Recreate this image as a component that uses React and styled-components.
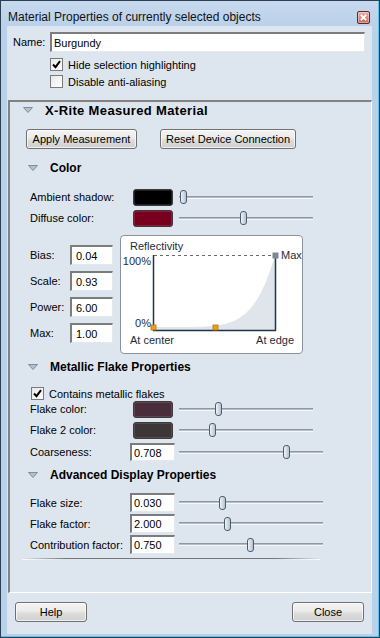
import React from 'react';
import styled, { createGlobalStyle } from 'styled-components';

const GlobalStyle = createGlobalStyle`
  html, body { margin: 0; padding: 0; background: #ffffff; }
  body { font-family: "Liberation Sans", Arial, sans-serif; font-size: 11px; color: #000; }
  * { box-sizing: border-box; }
`;

const Window = styled.div`
  width: 380px;
  height: 638px;
  border: 1px solid #2c3e52;
  background: linear-gradient(#c6d9ed 0px, #bad1ea 26px, #b9d1ea 100%);
  box-shadow: inset -1px 0 0 #5cc4ef, inset 0 -1px 0 #5cc4ef;
  display: flex;
  flex-direction: column;
  padding: 0 7px 3px 6px;
`;

const TitleBar = styled.div`
  height: 25px;
  flex: none;
  display: flex;
  align-items: flex-start;
  justify-content: space-between;
  padding: 9px 2px 0 1px;
  font-size: 12px;
  line-height: 14px;
  color: #111;
`;

const CloseBtn = styled.div`
  width: 13px;
  height: 13px;
  margin-top: 1px;
  border: 1px solid #5b2a2a;
  border-radius: 2px;
  background: linear-gradient(#eab0a6, #c8685c);
  box-shadow: inset 0 0 0 1px rgba(255, 255, 255, 0.35);
  display: flex;
  align-items: center;
  justify-content: center;
`;

const Content = styled.div`
  flex: 1;
  background: #dde6ee;
  display: flex;
  flex-direction: column;
  min-height: 0;
`;

const TopSection = styled.div`
  padding: 6px 7px 0 6px;
  flex: none;
`;

const NameRow = styled.div`
  display: flex;
  align-items: center;
  height: 20px;
`;

const NameLabel = styled.span`
  width: 37px;
`;

const SunkenInput = styled.div`
  height: ${(p) => p.$h || 20}px;
  width: ${(p) => (p.$w ? `${p.$w}px` : 'auto')};
  flex: ${(p) => (p.$w ? 'none' : '1')};
  background: #fff;
  border-top: 2px solid #7c7c7c;
  border-left: 2px solid #7c7c7c;
  border-right: 1px solid #e4e8ec;
  border-bottom: 1px solid #e4e8ec;
  padding-left: ${(p) => p.$pad ?? 2}px;
  display: flex;
  align-items: center;
  font-size: 11px;
  line-height: 12px;
  white-space: nowrap;
`;

const CheckRow = styled.label`
  display: flex;
  align-items: center;
  gap: 5px;
  height: 13px;
  margin-top: ${(p) => p.$mt || 0}px;
  margin-left: ${(p) => p.$ml || 0}px;
`;

const Box = styled.span`
  width: 13px;
  height: 13px;
  flex: none;
  border: 1px solid #7a7a7a;
  background: linear-gradient(135deg, #e8e8e8, #ffffff);
  display: flex;
  align-items: center;
  justify-content: center;
`;

const Panel = styled.div`
  flex: 1;
  margin: 12px 0 0 1px;
  border-top: 2px solid #828282;
  border-left: 2px solid #828282;
  border-right: 1px solid #ffffff;
  border-bottom: 1px solid #ffffff;
  display: flex;
  flex-direction: column;
  min-height: 0;
`;

const MainHeader = styled.div`
  display: flex;
  align-items: center;
  height: 16px;
  padding-left: 13px;
  gap: 12px;
  font-weight: bold;
  font-size: 13px;
  letter-spacing: 0.35px;
`;

const SubHeader = styled.div`
  display: flex;
  align-items: center;
  height: 16px;
  margin-top: ${(p) => p.$mt || 0}px;
  padding-left: 18px;
  gap: 12px;
  font-weight: bold;
  font-size: 12px;
`;

const ButtonRow = styled.div`
  display: flex;
  gap: 23px;
  margin-top: 11px;
  padding-left: 16px;
`;

const Button = styled.div`
  width: ${(p) => p.$w}px;
  height: 20px;
  border: 1px solid #707070;
  border-radius: 3px;
  background: linear-gradient(#f3f3f3 0%, #ebebeb 45%, #dddddd 55%, #cfcfcf 100%);
  box-shadow: inset 0 0 0 1px rgba(255, 255, 255, 0.7);
  display: flex;
  align-items: center;
  justify-content: center;
  font-size: 11px;
  color: #000;
`;

const Row = styled.div`
  display: flex;
  align-items: center;
  height: ${(p) => p.$h || 18}px;
  margin-top: ${(p) => p.$mt || 0}px;
  padding-left: 20px;
`;

const RowLabel = styled.span`
  width: ${(p) => p.$w}px;
  flex: none;
  white-space: nowrap;
`;

const Swatch = styled.div`
  width: 40px;
  height: 17px;
  flex: none;
  border: 1px solid #3a3a3a;
  border-radius: 3px;
  background: ${(p) => p.$color};
  box-shadow: inset 0 0 0 1px rgba(255, 255, 255, 0.12);
`;

const SliderWrap = styled.div`
  position: relative;
  width: ${(p) => p.$w}px;
  height: 14px;
  margin-left: ${(p) => p.$ml}px;
  flex: none;
  display: flex;
  align-items: center;
`;

const Track = styled.div`
  width: 100%;
  height: 3px;
  border-top: 1px solid #8e98a3;
  border-bottom: 1px solid #f5f8fb;
  background: #b5bec8;
`;

const Thumb = styled.div`
  position: absolute;
  top: 0;
  width: 7px;
  height: 14px;
  border: 1px solid #4c5c6d;
  border-radius: 3px;
  background: linear-gradient(to right, #eef3f8, #b4c2d1);
`;

const BiasBlock = styled.div`
  display: flex;
  margin-top: 8px;
  padding-left: 20px;
`;

const ParamColumn = styled.div`
  display: flex;
  flex-direction: column;
  gap: 6px;
  padding-top: 10px;
`;

const ParamRow = styled.div`
  display: flex;
  align-items: center;
  height: 20px;
`;

const GraphBox = styled.div`
  width: 183px;
  height: 119px;
  margin-left: 7px;
  border: 1px solid #8a939c;
  border-radius: 4px;
  background: #ffffff;
  display: flex;
`;

const Separator = styled.div`
  width: 298px;
  height: 2px;
  margin: 4px 0 0 12px;
  background: linear-gradient(to right, rgba(110,120,130,0), #6e7882 15%, #6e7882 85%, rgba(110,120,130,0));
  border-bottom: 1px solid rgba(255,255,255,0.8);
`;

const Footer = styled.div`
  height: 41px;
  flex: none;
  display: flex;
  justify-content: space-between;
  align-items: flex-start;
  padding: 9px 8px 0 8px;
`;

const Triangle = () => (
  <svg width="10" height="6" viewBox="0 0 10 6">
    <polygon points="0.5,0.5 9.5,0.5 5,5.5" fill="#b3c0cd" stroke="#7d8ea1" strokeWidth="1" />
  </svg>
);

const Check = ({ checked }) => (
  <Box>
    {checked && (
      <svg width="9" height="9" viewBox="0 0 9 9">
        <path d="M1 4.5 L3.5 7.2 L8 1.2" fill="none" stroke="#000" strokeWidth="2" />
      </svg>
    )}
  </Box>
);

const Slider = ({ width, ml, pos }) => (
  <SliderWrap $w={width} $ml={ml}>
    <Track />
    <Thumb style={{ left: pos - 3.5 }} />
  </SliderWrap>
);

const curvePoints = () => {
  const pts = ['32,94'];
  for (let i = 0; i <= 60; i++) {
    const t = i / 60;
    const f = Math.min(1, 0.04 + 0.96 * Math.pow(t, 6));
    pts.push(`${(32 + t * 122).toFixed(2)},${(94 - 75 * f).toFixed(2)}`);
  }
  pts.push('154,94');
  return pts.join(' ');
};

const Graph = () => (
  <svg width="181" height="117" viewBox="0 0 181 117" style={{ fontFamily: '"Liberation Sans", Arial, sans-serif', fontSize: 11 }}>
    <text x="9" y="14" fill="#1d2c3c">Reflectivity</text>
    <polygon points={curvePoints()} fill="#dfe5eb" />
    <line x1="33" y1="19.5" x2="152" y2="19.5" stroke="#6a6a6a" strokeDasharray="3 3" />
    <line x1="32.5" y1="19" x2="32.5" y2="95" stroke="#20344a" strokeWidth="1.5" />
    <line x1="32" y1="94.5" x2="155" y2="94.5" stroke="#20344a" strokeWidth="1.5" />
    <line x1="154.5" y1="19" x2="154.5" y2="95" stroke="#20344a" strokeWidth="1.5" />
    <rect x="151.5" y="16.5" width="6" height="6" fill="#7d8893" />
    <rect x="30" y="89" width="5" height="5" fill="#f0a010" stroke="#c27000" strokeWidth="0.8" />
    <rect x="92" y="89" width="5" height="5" fill="#f0a010" stroke="#c27000" strokeWidth="0.8" />
    <text x="30" y="29" textAnchor="end" fill="#1d2c3c">100%</text>
    <text x="30" y="91" textAnchor="end" fill="#1d2c3c">0%</text>
    <text x="160" y="23" fill="#1d2c3c">Max</text>
    <text x="9" y="108" fill="#1d2c3c">At center</text>
    <text x="173" y="108" textAnchor="end" fill="#1d2c3c">At edge</text>
  </svg>
);

export default function App() {
  return (
    <>
      <GlobalStyle />
      <Window>
        <TitleBar>
          <span>Material Properties of currently selected objects</span>
          <CloseBtn>
            <svg width="7" height="7" viewBox="0 0 7 7">
              <path d="M0.8 0.8 L6.2 6.2 M6.2 0.8 L0.8 6.2" stroke="#fff" strokeWidth="1.8" />
            </svg>
          </CloseBtn>
        </TitleBar>
        <Content>
          <TopSection>
            <NameRow>
              <NameLabel>Name:</NameLabel>
              <SunkenInput>Burgundy</SunkenInput>
            </NameRow>
            <CheckRow $mt={6} $ml={37}>
              <Check checked />
              <span>Hide selection highlighting</span>
            </CheckRow>
            <CheckRow $mt={4} $ml={37}>
              <Check />
              <span>Disable anti-aliasing</span>
            </CheckRow>
          </TopSection>
          <Panel>
            <MainHeader>
              <Triangle />
              <span>X-Rite Measured Material</span>
            </MainHeader>
            <ButtonRow>
              <Button $w={111}>Apply Measurement</Button>
              <Button $w={136}>Reset Device Connection</Button>
            </ButtonRow>
            <SubHeader $mt={11}>
              <Triangle />
              <span>Color</span>
            </SubHeader>
            <Row $mt={12}>
              <RowLabel $w={103}>Ambient shadow:</RowLabel>
              <Swatch $color="#000000" />
              <Slider width={134} ml={6} pos={4} />
            </Row>
            <Row $mt={3}>
              <RowLabel $w={103}>Diffuse color:</RowLabel>
              <Swatch $color="#78001e" />
              <Slider width={134} ml={6} pos={64} />
            </Row>
            <BiasBlock>
              <ParamColumn>
                {[
                  ['Bias:', '0.04'],
                  ['Scale:', '0.93'],
                  ['Power:', '6.00'],
                  ['Max:', '1.00'],
                ].map(([l, v]) => (
                  <ParamRow key={l}>
                    <RowLabel $w={40}>{l}</RowLabel>
                    <SunkenInput $w={43} $pad={4}>{v}</SunkenInput>
                  </ParamRow>
                ))}
              </ParamColumn>
              <GraphBox>
                <Graph />
              </GraphBox>
            </BiasBlock>
            <SubHeader $mt={5}>
              <Triangle />
              <span>Metallic Flake Properties</span>
            </SubHeader>
            <CheckRow $mt={12} $ml={21}>
              <Check checked />
              <span>Contains metallic flakes</span>
            </CheckRow>
            <Row>
              <RowLabel $w={103}>Flake color:</RowLabel>
              <Swatch $color="#4a2d3b" />
              <Slider width={134} ml={6} pos={39} />
            </Row>
            <Row $mt={3}>
              <RowLabel $w={103}>Flake 2 color:</RowLabel>
              <Swatch $color="#3c3636" />
              <Slider width={134} ml={6} pos={33} />
            </Row>
            <Row $mt={4}>
              <RowLabel $w={100}>Coarseness:</RowLabel>
              <SunkenInput $w={45} $h={18}>0.708</SunkenInput>
              <Slider width={144} ml={4} pos={107} />
            </Row>
            <SubHeader $mt={6}>
              <Triangle />
              <span>Advanced Display Properties</span>
            </SubHeader>
            <Row $mt={10} $h={19}>
              <RowLabel $w={100}>Flake size:</RowLabel>
              <SunkenInput $w={45} $h={19}>0.030</SunkenInput>
              <Slider width={144} ml={4} pos={43} />
            </Row>
            <Row $mt={2} $h={19}>
              <RowLabel $w={100}>Flake factor:</RowLabel>
              <SunkenInput $w={45} $h={19}>2.000</SunkenInput>
              <Slider width={144} ml={4} pos={48} />
            </Row>
            <Row $mt={2} $h={19}>
              <RowLabel $w={100}>Contribution factor:</RowLabel>
              <SunkenInput $w={45} $h={19}>0.750</SunkenInput>
              <Slider width={144} ml={4} pos={71} />
            </Row>
            <Separator />
          </Panel>
          <Footer>
            <Button $w={72}>Help</Button>
            <Button $w={72}>Close</Button>
          </Footer>
        </Content>
      </Window>
    </>
  );
}
